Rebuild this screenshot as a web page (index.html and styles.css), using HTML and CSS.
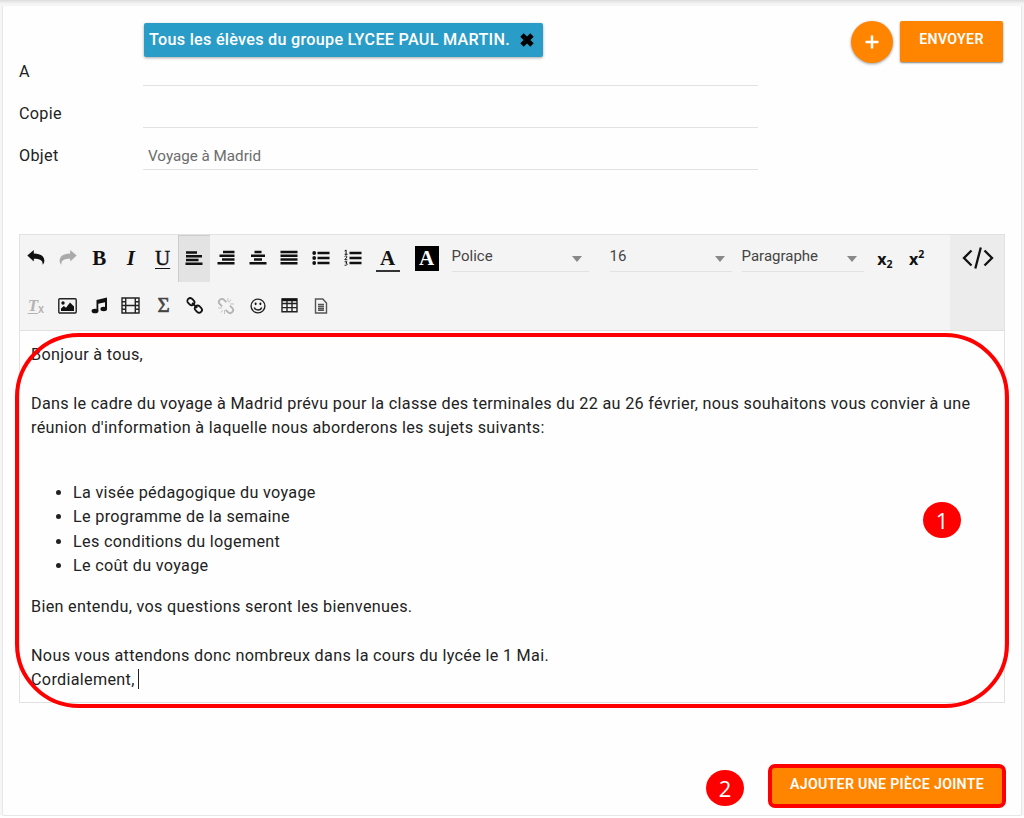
FILE: index.html
```html
<!DOCTYPE html>
<html lang="fr">
<head>
<meta charset="utf-8">
<title>Nouveau message</title>
<link rel="stylesheet" href="styles.css">
</head>
<body>
<main class="card">
  <section class="head">
    <div class="fields">
      <div class="field first">
        <label>A</label>
        <div class="input"><span class="chip"><span class="chip-text">Tous les élèves du groupe LYCEE PAUL MARTIN.</span><svg width="14" height="14" viewBox="0 0 14 14"><path d="M2 2 12 12M12 2 2 12" stroke="#000" stroke-width="4.800"/></svg></span></div>
      </div>
      <div class="field"><label>Copie</label><div class="input"></div></div>
      <div class="field"><label>Objet</label><div class="input"><span class="subject">Voyage à Madrid</span></div></div>
    </div>
    <div class="actions">
      <button class="round"><svg width="14" height="14" viewBox="0 0 14 14"><path d="M7 .5v13M.5 7h13" stroke="#fff" stroke-width="2.500"/></svg></button>
      <button class="btn send">ENVOYER</button>
    </div>
  </section>

  <section class="editor">
    <div class="toolbar">
      <div class="tools">
        <div class="row">
          <span class="tool"><svg width="18" height="18" viewBox="0 0 18 18"><path d="M.3 6.600 6.800 1v3.400c6.700 0 10.600 3 10.600 7.300 0 1.500-.7 3-1.800 4.100.4-4.500-2.200-6.100-8.800-6.100v2.800z"/></svg></span>
          <span class="tool off"><svg width="18" height="18" viewBox="0 0 18 18"><path d="M17.700 6.600 11.200 1v3.400C4.500 4.400.6 7.400.6 11.700c0 1.500.7 3 1.800 4.100C2 11.300 4.600 9.700 11.200 9.700v2.800z"/></svg></span>
          <span class="tool serif bold">B</span>
          <span class="tool serif italic">I</span>
          <span class="tool serif under">U</span>
          <span class="tool active"><svg width="18" height="18" viewBox="0 0 18 18"><path d="M1 2.500h11M1 6.200h16M1 10h12.500M.5 13.800h17" class="bars"/></svg></span>
          <span class="tool"><svg width="18" height="18" viewBox="0 0 18 18"><path d="M6 3h11.500M2.500 6.700h15M5 10.500h12.500M.5 14.300h17" class="bars"/></svg></span>
          <span class="tool"><svg width="18" height="18" viewBox="0 0 18 18"><path d="M5.500 3h7M2 6.700h14M5 10.500h8M.5 14.300h17" class="bars"/></svg></span>
          <span class="tool"><svg width="18" height="18" viewBox="0 0 18 18"><path d="M.5 3h17M.5 6.700h17M.5 10.500h17M.5 14.300h17" class="bars"/></svg></span>
          <span class="tool"><svg width="18" height="18" viewBox="0 0 18 18"><path d="M5.500 4h12M5.500 9h12M5.500 14h12" class="bars"/><circle cx="2.200" cy="4" r="1.900"/><circle cx="2.200" cy="9" r="1.900"/><circle cx="2.200" cy="14" r="1.900"/></svg></span>
          <span class="tool"><svg width="18" height="18" viewBox="0 0 18 18"><path d="M5.500 4h12M5.500 9h12M5.500 14h12" class="bars"/><path d="M.6 2 2.100 1v4.300M.6 5.300h3M.6 7.500c1-1 2.600-.6 2.300.6L.8 10.700h2.500M.6 12.800H3l-1 1.500c2 0 1.500 2.500-1.400 1.900" class="thin"/></svg></span>
          <span class="tool wide"><span class="fore">A</span></span>
          <span class="tool wide back-cell"><span class="back">A</span></span>
          <span class="select font">Police<i></i></span>
          <span class="select size">16<i></i></span>
          <span class="select format">Paragraphe<i></i></span>
          <span class="tool script">x<small class="low">2</small></span>
          <span class="tool script">x<small class="high">2</small></span>
        </div>
        <div class="row second">
          <span class="tool clear"><em>T</em><small>x</small></span>
          <span class="tool"><svg width="19" height="16" viewBox="0 0 19 16"><rect x=".8" y=".8" width="17.400" height="14.200" rx="1" class="line"/><circle cx="5" cy="5" r="1.700"/><path d="M3 13v-2.500L5.800 8 8 9.800 12 4.500l4 4V13z"/></svg></span>
          <span class="tool"><svg width="17" height="17" viewBox="0 0 17 17"><path d="M5.500 3 16 .5v12H14V5.200L7.300 6.800v7.500H5.500z"/><ellipse cx="4" cy="14" rx="3.400" ry="2.300"/><ellipse cx="12.700" cy="12" rx="3.300" ry="2.200"/></svg></span>
          <span class="tool"><svg width="19" height="17" viewBox="0 0 19 17"><path d="M1 1h17v15H1zM4.700 1v15M14.300 1v15M4.700 8.500h9.600M1 4.700h3.700M1 8.500h3.700M1 12.200h3.700M14.300 4.700H18M14.300 8.500H18M14.300 12.200H18" class="line"/></svg></span>
          <span class="tool serif sigma">Σ</span>
          <span class="tool"><svg width="17" height="17" viewBox="0 0 17 17"><g transform="rotate(45 8.500 8.500)" fill="none" stroke="#111" stroke-width="1.800"><rect x="-.6" y="5.500" width="7.600" height="5.600" rx="2.800"/><rect x="10" y="5.500" width="7.600" height="5.600" rx="2.800"/><path d="M5 8.300h7"/></g></svg></span>
          <span class="tool"><svg width="18" height="18" viewBox="0 0 18 18"><g transform="rotate(45 9 9)" fill="none" stroke="#b5b5b5" stroke-width="1.900"><path d="M6.500 6H3.300a3 3 0 0 0 0 6h3.200M11.500 6h3.200a3 3 0 0 1 0 6h-3.200"/></g><path d="M11 1v4M14 2.500l-2 3M17 7h-4M1 11h4M3.500 15.500l2.500-2.300M7.500 17v-4" stroke="#c5c5c5" fill="none"/></svg></span>
          <span class="tool"><svg width="16" height="16" viewBox="0 0 16 16"><circle cx="8" cy="8" r="6.900" class="line"/><path d="M4.300 9.500c1 3.300 6.400 3.300 7.400 0" class="line"/><ellipse cx="5.600" cy="5.800" rx="1" ry="1.400"/><ellipse cx="10.400" cy="5.800" rx="1" ry="1.400"/></svg></span>
          <span class="tool"><svg width="17" height="15" viewBox="0 0 17 15"><path d="M1 1h15v12.800H1zM1 5.500h15M1 9.600h15M6 3v11M11 3v11" class="line"/><path d="M1 .5h15v2.700H1z"/></svg></span>
          <span class="tool"><svg width="14" height="16" viewBox="0 0 14 16"><path d="M1.500 1h7.300L12.500 5v10h-11z" fill="none" stroke="#555" stroke-width="1.400"/><path d="M4 6.500h6M4 8.500h6M4 10.500h6M4 12.300h6" stroke="#555" stroke-width="1.400"/></svg></span>
        </div>
      </div>
      <div class="code"><svg width="32" height="24" viewBox="0 0 32 24"><path d="M9.500 4.500 2 12l7.500 7.500M22.500 4.500 30 12l-7.500 7.500M18.800 1.500l-5.500 21" fill="none" stroke="#111" stroke-width="2.300"/></svg></div>
    </div>
    <article class="content">
      <p>Bonjour à tous,</p>
      <p class="intro">Dans le cadre du voyage à Madrid prévu pour la classe des terminales du 22 au 26 février, nous souhaitons vous convier à une<br>réunion d'information à laquelle nous aborderons les sujets suivants:</p>
      <ul>
        <li>La visée pédagogique du voyage</li>
        <li>Le programme de la semaine</li>
        <li>Les conditions du logement</li>
        <li>Le coût du voyage</li>
      </ul>
      <p>Bien entendu, vos questions seront les bienvenues.</p>
      <p class="closing">Nous vous attendons donc nombreux dans la cours du lycée le 1 Mai.<br>Cordialement,<span class="caret"></span></p>
    </article>
    <div class="outline"></div>
    <span class="mark one">1</span>
  </section>

  <footer class="foot">
    <span class="mark two">2</span>
    <button class="btn attach">AJOUTER UNE PIÈCE JOINTE</button>
  </footer>
</main>
</body>
</html>
```

FILE: styles.css
```css
* { box-sizing: border-box; }
body {
  margin: 0;
  height: 818px;
  padding: 5px 3px 0 2px;
  overflow: hidden;
  background: linear-gradient(#dcdcdc 0, #f6f6f6 4px, #f6f6f6 815px, #fff 816px);
  font-family: Roboto, sans-serif;
  font-size: 16.200px;
  color: #222;
}
.card {
  height: 811px;
  width: 1020px;
  padding: 0 17px;
  background: #fefefe;
  border: 1px solid #e6e6e6;
  border-top-color: #f4f4f4;
  border-radius: 2px;
}
.head { display: flex; height: 228px; margin-left: -1px; }
.fields { width: 739px; }
.field { display: flex; height: 42.200px; }
.field.first { height: 80px; }
.field label { width: 124px; padding-top: 18px; line-height: 20px; letter-spacing: .3px; }
.field.first label { padding-top: 56px; }
.input { flex: 1; border-bottom: 1.500px solid #e2e2e2; padding: 17px 0 0 2px; }
.chip {
  display: flex;
  align-items: center;
  justify-content: space-between;
  width: 399px;
  height: 34px;
  margin-left: -1px;
  padding: 0 9px 0 5px;
  background: #2a9cc8;
  color: #fff;
  font-weight: 500;
  letter-spacing: .27px;
  border-radius: 2px;
  box-shadow: 0 1px 3px rgba(0,0,0,.35);
  white-space: nowrap;
}
.chip-text { padding-bottom: 1px; }
.subject { display: block; padding: 2px 0 0 3px; font-size: 15.200px; line-height: 19px; color: #6c6c6c; }
.actions { display: flex; gap: 7px; margin-left: 93px; padding-top: 15px; }
button { border: 0; font-family: inherit; color: #fff; background: #ff8500; }
.round { display: grid; place-items: center; width: 42px; height: 42px; padding: 0; border-radius: 50%; box-shadow: 0 1px 3px rgba(0,0,0,.4); }
.btn { font-weight: 600; font-size: 14.200px; letter-spacing: .3px; border-radius: 2px; white-space: nowrap; }
.send { width: 103px; height: 41px; padding: 0 0 5px; box-shadow: 0 1px 2px rgba(0,0,0,.5); }

.editor { position: relative; width: 986px; height: 469px; margin-left: -1px; border: 1px solid #e2e2e2; }
.toolbar { display: flex; height: 96px; background: #f4f4f4; border-bottom: 1px solid #e0e0e0; }
.tools { width: 930px; }
.row { display: flex; height: 47px; }
.tool { display: flex; justify-content: center; align-items: center; flex: none; width: 31.700px; height: 46px; color: #111; fill: #111; }
.off { fill: #aaa; }
.active { background: #e3e3e3; box-shadow: inset 1px 1px #ccc; height: 47px; }
.bars { stroke: #111; stroke-width: 2.400; fill: none; }
.thin { stroke: #111; stroke-width: 1; fill: none; }
.line { stroke: #222; stroke-width: 1.400; fill: none; }
.serif { font-family: "Liberation Serif", serif; font-size: 21px; }
.bold { font-weight: 700; }
.italic { font-style: italic; font-weight: 700; }
.under { -webkit-text-stroke: .4px #111; text-decoration: underline; text-decoration-thickness: 1px; text-underline-offset: 3px; }
.sigma { font-size: 21px; color: #444; -webkit-text-stroke: .6px #444; padding-left: 2px; }
.wide { width: 38px; font: 700 21px "Liberation Serif", serif; }
.back-cell { width: 40px; }
.fore { width: 24px; height: 26px; margin-top: 2px; line-height: 24px; text-align: center; border-bottom: 2px solid #333; }
.back { width: 24px; height: 25px; line-height: 25px; text-align: center; background: #000; color: #fff; }
.select { display: flex; justify-content: space-between; height: 37px; padding: 11px 7px 0 0; border-bottom: 1.500px solid #e2e2e2; font-size: 15px; line-height: 20px; color: #444; }
.select i { width: 0; height: 0; margin-top: 10px; border: 5px solid transparent; border-top: 6px solid #888; border-bottom: 0; }
.font { width: 137px; margin-left: 5px; }
.size { width: 122px; margin-left: 21px; }
.format { width: 122px; margin: 0 5px 0 10px; }
.script { font: 700 16px "Open Sans", sans-serif; padding: 2px 0 0 1px; }
.script small { font-size: 10.500px; }
.low { margin-top: 9px; }
.high { margin-top: -10px; }
.second .tool { height: 47px; }
.clear { color: #b4b4b4; }
.clear em { font: italic 700 17px "Liberation Serif", serif; text-decoration: underline; text-decoration-thickness: 1px; text-underline-offset: 2px; }
.clear small { font-size: 12px; font-weight: 500; padding-top: 7px; }
.code { width: 54px; padding: 11px 0 0 12px; background: #ececec; }

.content { padding: 12px 11px; line-height: 24.300px; letter-spacing: .31px; white-space: nowrap; }
.content p { margin: 0; }
.content .intro { padding-top: 24.300px; }
.content ul { margin: 41px 0 17px; padding-left: 42px; }
.content .closing { padding-top: 24.300px; }
.caret { display: inline-block; width: 1.500px; height: 20px; margin-left: 3px; vertical-align: -4px; background: #222; }
.outline { position: absolute; left: -5px; top: 98px; width: 994px; height: 375px; border: 4px solid #f00; border-radius: 64px; }
.mark { display: grid; place-items: center; width: 38px; height: 36px; border-radius: 50%; background: #f00; color: #fff; font: 22px "Open Sans", sans-serif; }
.one { position: absolute; left: 903px; top: 267px; }
.two { margin-top: 4px; }
.foot { display: flex; align-items: center; gap: 24px; margin: 61px -2px 0 0; justify-content: flex-end; }
.attach { width: 238px; height: 44px; padding: 0 0 5px; border: 4px solid #f00; border-radius: 7px; }
```
